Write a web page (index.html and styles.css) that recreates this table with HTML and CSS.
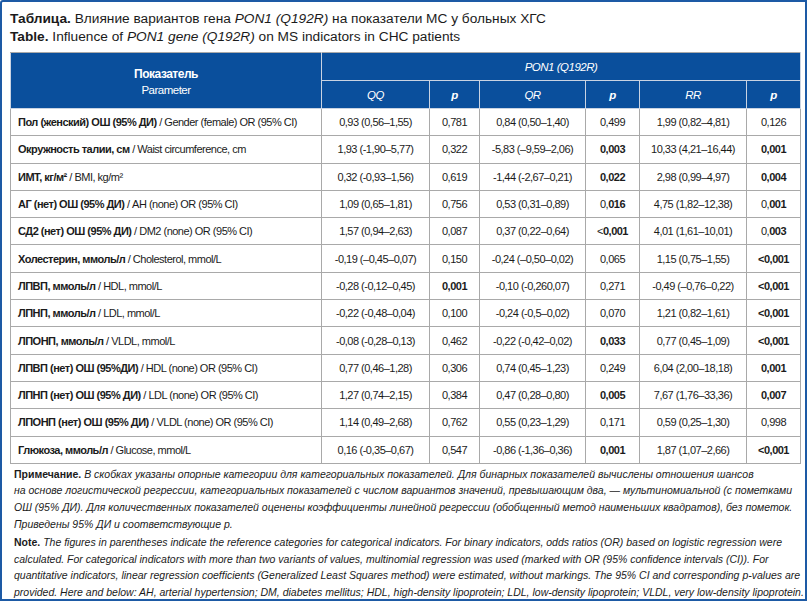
FILE: index.html
```html
<!DOCTYPE html>
<html lang="ru">
<head>
<meta charset="utf-8">
<title>Таблица PON1</title>
<link rel="stylesheet" href="styles.css">
</head>
<body>
<div class="frame">
  <div class="title">
    <div><b>Таблица.</b> Влияние вариантов гена <i>PON1 (Q192R)</i> на показатели МС у больных ХГС</div>
    <div><b>Table.</b> Influence of <i>PON1 gene (Q192R)</i> on MS indicators in CHC patients</div>
  </div>
  <table class="data">
    <colgroup>
      <col class="c-param"><col class="c-qq"><col class="c-p1"><col class="c-qr"><col class="c-p2"><col class="c-rr"><col class="c-p3">
    </colgroup>
    <thead>
      <tr class="h1">
        <th rowspan="2" class="h-param"><b>Показатель</b><br>Parameter</th>
        <th colspan="6" class="it">PON1 (Q192R)</th>
      </tr>
      <tr class="h2">
        <th class="it">QQ</th><th class="pi">p</th><th class="it">QR</th><th class="pi">p</th><th class="it">RR</th><th class="pi">p</th>
      </tr>
    </thead>
    <tbody>
      <tr><td><b>Пол (женский) ОШ (95% ДИ)</b> / Gender (female) OR (95% CI)</td><td>0,93 (0,56–1,55)</td><td>0,781</td><td>0,84 (0,50–1,40)</td><td>0,499</td><td>1,99 (0,82–4,81)</td><td>0,126</td></tr>
      <tr><td><b>Окружность талии, см</b> / Waist circumference, cm</td><td>1,93 (-1,90–5,77)</td><td>0,322</td><td>-5,83 (–9,59–2,06)</td><td><b>0,003</b></td><td>10,33 (4,21–16,44)</td><td><b>0,001</b></td></tr>
      <tr><td><b>ИМТ, кг/м²</b> / BMI, kg/m²</td><td>0,32 (-0,93–1,56)</td><td>0,619</td><td>-1,44 (-2,67–0,21)</td><td><b>0,022</b></td><td>2,98 (0,99–4,97)</td><td><b>0,004</b></td></tr>
      <tr><td><b>АГ (нет) ОШ (95% ДИ)</b> / AH (none) OR (95% CI)</td><td>1,09 (0,65–1,81)</td><td>0,756</td><td>0,53 (0,31–0,89)</td><td>0,<b>016</b></td><td>4,75 (1,82–12,38)</td><td>0,<b>001</b></td></tr>
      <tr><td><b>СД2 (нет) ОШ (95% ДИ)</b> / DM2 (none) OR (95% CI)</td><td>1,57 (0,94–2,63)</td><td>0,087</td><td>0,37 (0,22–0,64)</td><td>&lt;<b>0,001</b></td><td>4,01 (1,61–10,01)</td><td>0,<b>003</b></td></tr>
      <tr><td><b>Холестерин, ммоль/л</b> / Cholesterol, mmol/L</td><td>-0,19 (–0,45–0,07)</td><td>0,150</td><td>-0,24 (–0,50–0,02)</td><td>0,065</td><td>1,15 (0,75–1,55)</td><td><b>&lt;0,001</b></td></tr>
      <tr><td><b>ЛПВП, ммоль/л</b> / HDL, mmol/L</td><td>-0,28 (-0,12–0,45)</td><td><b>0,001</b></td><td>-0,10 (-0,260,07)</td><td>0,271</td><td>-0,49 (–0,76–0,22)</td><td><b>&lt;0,001</b></td></tr>
      <tr><td><b>ЛПНП, ммоль/л</b> / LDL, mmol/L</td><td>-0,22 (-0,48–0,04)</td><td>0,100</td><td>-0,24 (-0,5–0,02)</td><td>0,070</td><td>1,21 (0,82–1,61)</td><td><b>&lt;0,001</b></td></tr>
      <tr><td><b>ЛПОНП, ммоль/л</b> / VLDL, mmol/L</td><td>-0,08 (-0,28–0,13)</td><td>0,462</td><td>-0,22 (-0,42–0,02)</td><td><b>0,033</b></td><td>0,77 (0,45–1,09)</td><td><b>&lt;0,001</b></td></tr>
      <tr><td><b>ЛПВП (нет) ОШ (95%ДИ)</b> / HDL (none) OR (95% CI)</td><td>0,77 (0,46–1,28)</td><td>0,306</td><td>0,74 (0,45–1,23)</td><td>0,249</td><td>6,04 (2,00–18,18)</td><td><b>0,001</b></td></tr>
      <tr><td><b>ЛПНП (нет) ОШ (95% ДИ)</b> / LDL (none) OR (95% CI)</td><td>1,27 (0,74–2,15)</td><td>0,384</td><td>0,47 (0,28–0,80)</td><td><b>0,005</b></td><td>7,67 (1,76–33,36)</td><td><b>0,007</b></td></tr>
      <tr><td><b>ЛПОНП (нет) ОШ (95% ДИ)</b> / VLDL (none) OR (95% CI)</td><td>1,14 (0,49–2,68)</td><td>0,762</td><td>0,55 (0,23–1,29)</td><td>0,171</td><td>0,59 (0,25–1,30)</td><td>0,998</td></tr>
      <tr><td><b>Глюкоза, ммоль/л</b> / Glucose, mmol/L</td><td>0,16 (-0,35–0,67)</td><td>0,547</td><td>-0,86 (-1,36–0,36)</td><td><b>0,001</b></td><td>1,87 (1,07–2,66)</td><td><b>&lt;0,001</b></td></tr>
    </tbody>
  </table>
  <div class="notes">
    <p class="note"><b>Примечание.</b> <i>В скобках указаны опорные категории для категориальных показателей. Для бинарных показателей вычислены отношения шансов<br>на основе логистической регрессии, категориальных показателей с числом вариантов значений, превышающим два, — мультиномиальной (с пометками<br>ОШ (95% ДИ). Для количественных показателей оценены коэффициенты линейной регрессии (обобщенный метод наименьших квадратов), без пометок.<br>Приведены 95% ДИ и соответствующие p.</i></p>
    <p class="note en"><b>Note.</b> <i>The figures in parentheses indicate the reference categories for categorical indicators. For binary indicators, odds ratios (OR) based on logistic regression were<br>calculated. For categorical indicators with more than two variants of values, multinomial regression was used (marked with OR (95% confidence intervals (CI)). For<br>quantitative indicators, linear regression coefficients (Generalized Least Squares method) were estimated, without markings. The 95% CI and corresponding p-values are<br>provided. Here and below: AH, arterial hypertension; DM, diabetes mellitus; HDL, high-density lipoprotein; LDL, low-density lipoprotein; VLDL, very low-density lipoprotein.</i></p>
  </div>
</div>
</body>
</html>
```
FILE: styles.css
```css
html, body {
  margin: 0;
  padding: 0;
  background: #ffffff;
}
body {
  font-family: "Liberation Sans", Arial, sans-serif;
  color: #1b1b1b;
}
.frame {
  box-sizing: border-box;
  width: 807px;
  height: 601px;
  border: 2px solid #1d5aa5;
  border-radius: 3px 0 0 0;
  padding: 8px 5px 0 8px;
}
.title {
  font-size: 13.7px;
  line-height: 18px;
  margin-bottom: 6px;
}
.title b { font-weight: bold; }

.data {
  width: 790px;
  table-layout: fixed;
  border-collapse: collapse;
  font-family: "Liberation Sans", Arial, sans-serif;
  font-size: 11px;
  letter-spacing: -0.5px;
  color: #1b1b1b;
  border: 1px solid #a9a9a9;
}
.c-param { width: 311px; }
.c-qq { width: 108px; }
.c-p1 { width: 50px; }
.c-qr { width: 106px; }
.c-p2 { width: 54px; }
.c-rr { width: 107px; }
.c-p3 { width: 54px; }

.data thead th {
  background: #0a4f9c;
  color: #ffffff;
  font-weight: normal;
  text-align: center;
  border: 1px solid #c9d3e2;
  padding: 0;
  height: 27px;
  font-size: 11.5px;
}
.data thead th.h-param {
  line-height: 16px;
  padding-top: 2px;
}
.data thead th b { font-weight: bold; font-size: 12px; }
.data thead .it { font-style: italic; }
.data thead .pi { font-style: italic; font-weight: bold; }
.data thead tr.h1 th { border-top-color: #a9a9a9; }

.data tbody td {
  border: 1px solid #a9a9a9;
  text-align: center;
  padding: 0 2px;
  height: 26.3px;
  white-space: nowrap;
}
.data tbody td:first-child {
  text-align: left;
  padding-left: 7px;
}
.data tbody b { font-weight: bold; }

.notes {
  padding: 2px 0 0 4px;
  font-size: 10.5px;
  line-height: 16.6px;
  color: #1b1b1b;
}
.note {
  margin: 0 0 2px 0;
  white-space: nowrap;
}
.note b { font-weight: bold; font-style: normal; }
```
